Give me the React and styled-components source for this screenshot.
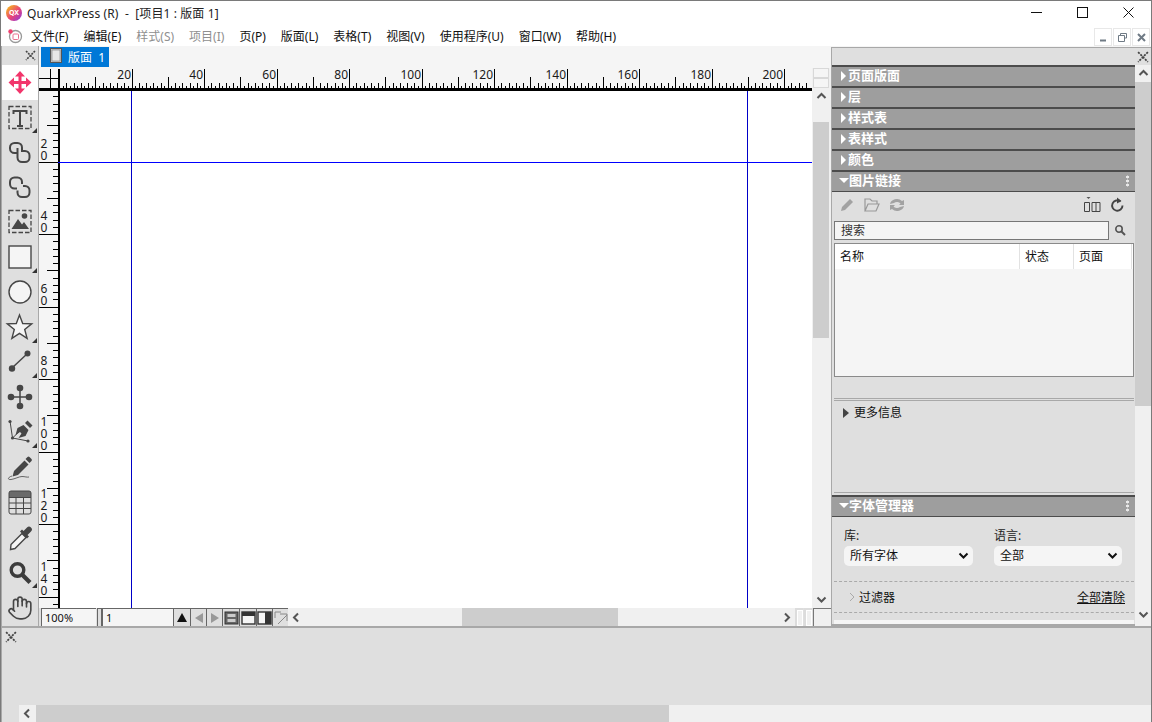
import React from "react";
import styled, { createGlobalStyle } from "styled-components";
import { Hand } from "lucide-react";

const UI_FONT = `"Noto Sans", "Noto Sans CJK SC", sans-serif`;

const GlobalStyle = createGlobalStyle`
	html, body {
		margin: 0;
		padding: 0;
		background: #ffffff;
	}
	* {
		box-sizing: border-box;
	}
`;

const MENUS = [
	{ label: "文件(F)" },
	{ label: "编辑(E)" },
	{ label: "样式(S)", off: true },
	{ label: "项目(I)", off: true },
	{ label: "页(P)" },
	{ label: "版面(L)" },
	{ label: "表格(T)" },
	{ label: "视图(V)" },
	{ label: "使用程序(U)" },
	{ label: "窗口(W)" },
	{ label: "帮助(H)" },
];

const PX_PER_UNIT = 3.625;

function CloseMark({ size = 11 }) {
	return (
		<svg width={size} height={size} viewBox="0 0 11 11">
			<path d="M1 1l9 9M10 1l-9 9" stroke="#444" strokeWidth="1.6" strokeDasharray="2 1" fill="none" />
		</svg>
	);
}

function Chevron({ dir = "up", color = "#555" }) {
	const paths = {
		up: "M1.5 7L5.5 3l4 4",
		down: "M1.5 3.5l4 4 4-4",
		left: "M7 1.5L3 5.5l4 4",
		right: "M4 1.5l4 4-4 4",
	};
	return (
		<svg width="11" height="11" viewBox="0 0 11 11">
			<path d={paths[dir]} stroke={color} strokeWidth="2" fill="none" />
		</svg>
	);
}

function TopRuler() {
	const ticks = [];
	for (let v = 0; v <= 206; v++) {
		const x = Math.round(20 + v * PX_PER_UNIT) + 0.5;
		let top = 18;
		if (v % 2 === 0) top = 15;
		if (v % 10 === 0) top = 9;
		if (v % 20 === 0) top = 1;
		ticks.push(<line key={v} x1={x} x2={x} y1={top} y2={20} stroke="#000" />);
		if (v % 20 === 0 && v > 0) {
			ticks.push(
				<text key={"t" + v} x={x - 1.5} y={11} textAnchor="end" fontSize="12" fontFamily={UI_FONT} fill="#1a1a1a">
					{v}
				</text>
			);
		}
	}
	return (
		<svg width="773" height="23" viewBox="0 0 773 23" style={{ display: "block", overflow: "visible" }}>
			<path d="M11.5 1v19M0 10.5h20" stroke="#000" fill="none" />
			<path d="M0 20.5h20" stroke="#000" fill="none" />
			<rect x="19" y="1" width="2" height="22" fill="#000" />
			<rect x="0" y="21" width="773" height="2" fill="#000" />
			<rect x="20" y="20" width="753" height="1" fill="#000" />
			{ticks}
		</svg>
	);
}

function SideRuler() {
	const ticks = [];
	for (let v = 2; v <= 142; v += 2) {
		const y = Math.round(v * PX_PER_UNIT) - 2 + 0.5;
		let left = 14;
		if (v % 10 === 0) left = 8;
		if (v % 20 === 0) left = 0;
		ticks.push(<line key={v} x1={left} x2={20} y1={y} y2={y} stroke="#000" />);
		if (v % 20 === 0) {
			const digits = String(v).split("");
			digits.forEach((d, i) => {
				ticks.push(
					<text key={v + "-" + i} x={1.5} y={y - 3 - (digits.length - 1 - i) * 12} fontSize="12" fontFamily={UI_FONT} fill="#1a1a1a">
						{d}
					</text>
				);
			});
		}
	}
	return (
		<svg width="21" height="517" viewBox="0 0 21 517" style={{ display: "block", flexShrink: 0 }}>
			<rect x="19" y="0" width="2" height="517" fill="#000" />
			{ticks}
		</svg>
	);
}

const Ink = "#464646";

const TOOLS = [
	{
		key: "move",
		active: true,
		art: (
			<g>
				<path d="M18 8v19M8.500 17.500h19" stroke="#f2356b" strokeWidth="3" fill="none" />
				<path d="M18 6l5 5.500H13zM18 29l5-5.500H13zM6.500 17.500l5.500-5v10zM29.500 17.500l-5.500-5v10z" fill="#f2356b" />
			</g>
		),
	},
	{
		key: "text",
		corner: true,
		art: (
			<g fill="none" stroke={Ink}>
				<rect x="7" y="6.500" width="22" height="22" strokeWidth="1.300" strokeDasharray="4.500 2" />
				<path d="M11.500 14v-3h13v3M18 11v15M15 26h6" strokeWidth="2" />
			</g>
		),
	},
	{
		key: "link",
		art: (
			<g fill="none" stroke={Ink} strokeWidth="2">
				<path d="M15 18h-2.500A4.500 4.500 0 0 1 8 13.500v-1A4.500 4.500 0 0 1 12.500 8h3a4.500 4.500 0 0 1 4.500 4.500V17" />
				<path d="M21 16h2a4.500 4.500 0 0 1 4.500 4.500v2a4.500 4.500 0 0 1-4.500 4.500h-3a4.500 4.500 0 0 1-4.500-4.500V13" />
			</g>
		),
	},
	{
		key: "unlink",
		art: (
			<g fill="none" stroke={Ink} strokeWidth="2">
				<path d="M15 18.500h-2.500A4.500 4.500 0 0 1 8 14v-2a4.500 4.500 0 0 1 4.500-4.500h3a4.500 4.500 0 0 1 4.500 4.500v2" />
				<path d="M21 16h2a4.500 4.500 0 0 1 4.500 4.500v2a4.500 4.500 0 0 1-4.500 4.500h-3a4.500 4.500 0 0 1-4.500-4.500v-2" />
			</g>
		),
	},
	{
		key: "picture",
		art: (
			<g>
				<rect x="7" y="5.500" width="22" height="22" fill="none" stroke={Ink} strokeWidth="1.300" strokeDasharray="4.500 2" />
				<circle cx="22.500" cy="11" r="2.800" fill={Ink} />
				<path d="M9.500 24l6.500-10 4 5.500 2-2.500 5 7z" fill={Ink} />
			</g>
		),
	},
	{
		key: "rect",
		corner: true,
		art: <rect x="7" y="6" width="22" height="22" fill="#f5f5f5" stroke={Ink} strokeWidth="1.400" />,
	},
	{
		key: "oval",
		art: <circle cx="18" cy="17" r="11" fill="#f5f5f5" stroke={Ink} strokeWidth="1.400" />,
	},
	{
		key: "star",
		corner: true,
		art: (
			<path
				d="M17.500 5l3.200 8.500 9 .400-7 5.600 2.400 8.800-7.600-5-7.600 5 2.400-8.800-7-5.600 9-.400z"
				fill="#f5f5f5"
				stroke={Ink}
				strokeWidth="1.400"
			/>
		),
	},
	{
		key: "line",
		corner: true,
		art: (
			<g fill={Ink}>
				<path d="M10 23l16-15" stroke={Ink} strokeWidth="1.500" />
				<circle cx="10" cy="23.500" r="3.200" />
				<circle cx="25.500" cy="8.500" r="3" />
			</g>
		),
	},
	{
		key: "nodes",
		art: (
			<g fill={Ink}>
				<path d="M18 7v20M7 17h22" stroke={Ink} strokeWidth="1.500" />
				<circle cx="18" cy="8" r="3.300" />
				<circle cx="18" cy="26" r="3.300" />
				<circle cx="9" cy="17" r="3.300" />
				<circle cx="27" cy="17" r="3.300" />
			</g>
		),
	},
	{
		key: "pen",
		corner: true,
		art: (
			<g fill={Ink}>
				<path d="M8 6l2.500 17 15.500 3M10.500 23L20 14" stroke={Ink} strokeWidth="1" fill="none" />
				<circle cx="8" cy="6.500" r="1.600" />
				<circle cx="10.500" cy="23" r="1.600" />
				<circle cx="26" cy="26" r="1.600" />
				<path d="M13.500 20l2-7 6-3 5 5-3 6-7 2 3-4.500-1.500-1.500z" />
				<path d="M23 8l2.500-2.500 5 5L28 13z" />
			</g>
		),
	},
	{
		key: "pencil",
		art: (
			<g>
				<path d="M12 21l10.500-10.500 4 4L16 25l-5.500 1.500z" fill={Ink} />
				<path d="M23.500 9l2-2a1.500 1.500 0 0 1 2 0l2 2a1.500 1.500 0 0 1 0 2l-2 2z" fill={Ink} />
				<path d="M10 26c-4 1-5 4-1 3.500s8-3 11-3c3 0 5 1 7 .500" stroke={Ink} strokeWidth="0.800" fill="none" />
			</g>
		),
	},
	{
		key: "table",
		art: (
			<g>
				<path d="M9 6h18a2 2 0 0 1 2 2v4H7V8a2 2 0 0 1 2-2z" fill="#6a6a6a" />
				<path
					d="M9 6h18a2 2 0 0 1 2 2v19a2 2 0 0 1-2 2H9a2 2 0 0 1-2-2V8a2 2 0 0 1 2-2zM7 12.500h22M7 18h22M7 23.500h22M14 12.500V29M21.500 12.500V29"
					fill="none"
					stroke={Ink}
					strokeWidth="1"
				/>
			</g>
		),
	},
	{
		key: "dropper",
		art: (
			<g>
				<path d="M9 24.500l11-11 4 4-11 11-4.500 1z" fill="#f5f5f5" stroke={Ink} strokeWidth="1.400" />
				<path d="M18 11.500l2-2 1.500 1.500 3.500-3.500a2.800 2.800 0 0 1 4 4l-3.500 3.500 1.500 1.500-2 2z" fill={Ink} />
			</g>
		),
	},
	{
		key: "zoom",
		corner: true,
		art: (
			<g fill="none" stroke="#3c3c3c">
				<circle cx="15.500" cy="15" r="6.300" strokeWidth="3.400" />
				<path d="M20.500 20l7.500 7.500" strokeWidth="4.200" />
			</g>
		),
	},
];

function Tool({ tool }) {
	return (
		<ToolButton $active={tool.active}>
			<svg width="36" height="35" viewBox="0 0 36 35">
				{tool.art}
			</svg>
			{tool.corner && <CornerMark />}
		</ToolButton>
	);
}

function BarLayoutIcon({ kind }) {
	if (kind === "split") {
		return (
			<svg width="15" height="14" viewBox="0 0 15 14">
				<rect x="1" y="1" width="13" height="12" fill="#f5f5f5" stroke="#333" strokeWidth="1.400" />
				<rect x="1" y="1" width="13" height="4" fill="#333" />
			</svg>
		);
	}
	if (kind === "half") {
		return (
			<svg width="15" height="14" viewBox="0 0 15 14">
				<rect x="1" y="1" width="13" height="12" fill="#f5f5f5" stroke="#333" strokeWidth="1.400" />
				<rect x="8" y="1" width="6" height="12" fill="#333" />
			</svg>
		);
	}
	return (
		<svg width="15" height="14" viewBox="0 0 15 14">
			<rect x="1" y="1" width="13" height="12" fill="#666" stroke="#333" />
			<rect x="3.500" y="3" width="8" height="3" fill="#ccc" />
			<rect x="3.500" y="8" width="8" height="3" fill="#ccc" />
		</svg>
	);
}

function Section({ title, open, dots }) {
	return (
		<PanelHeader>
			<Caret $open={open} />
			<HeaderLabel>{title}</HeaderLabel>
			{dots && <Dots />}
		</PanelHeader>
	);
}

export default function App() {
	return (
		<Windows>
			<GlobalStyle />
			<TitleBar>
				<AppLogo>
					<span>QX</span>
				</AppLogo>
				<TitleText>QuarkXPress (R)&nbsp; -&nbsp; [项目1 : 版面 1]</TitleText>
				<WindowButtons>
					<WindowButton>
						<svg width="11" height="11" viewBox="0 0 11 11">
							<path d="M0 5.500h11" stroke="#111" />
						</svg>
					</WindowButton>
					<WindowButton>
						<svg width="11" height="11" viewBox="0 0 11 11">
							<rect x="0.500" y="0.500" width="10" height="10" fill="none" stroke="#111" />
						</svg>
					</WindowButton>
					<WindowButton>
						<svg width="11" height="11" viewBox="0 0 11 11">
							<path d="M0.500 0.500l10 10M10.500 0.500l-10 10" stroke="#111" />
						</svg>
					</WindowButton>
				</WindowButtons>
			</TitleBar>

			<MenuBar>
				<DocLogo>
					<svg width="16" height="16" viewBox="0 0 16 16">
						<circle cx="8.500" cy="8.500" r="6" fill="#fff" stroke="#999" strokeWidth="1.300" />
						<rect x="6" y="6" width="5.500" height="5.500" rx="1" fill="none" stroke="#e8708e" />
						<circle cx="3.500" cy="3.500" r="2.200" fill="#f0406e" />
					</svg>
				</DocLogo>
				{MENUS.map((m) => (
					<MenuItem key={m.label} $off={m.off}>
						{m.label}
					</MenuItem>
				))}
				<ChildButtons>
					<ChildButton>
						<svg width="9" height="9" viewBox="0 0 9 9">
							<path d="M1 7.500h6" stroke="#6f7a85" strokeWidth="2" />
						</svg>
					</ChildButton>
					<ChildButton>
						<svg width="9" height="9" viewBox="0 0 9 9">
							<path d="M2.500 2V.500h6v4.500H7M.500 2.500h6v6h-6z" fill="none" stroke="#6f7a85" />
						</svg>
					</ChildButton>
					<ChildButton>
						<svg width="9" height="9" viewBox="0 0 9 9">
							<path d="M1 1l7 7M8 1L1 8" stroke="#6f7a85" strokeWidth="2" />
						</svg>
					</ChildButton>
				</ChildButtons>
			</MenuBar>

			<Workspace>
				<Toolbox>
					<ToolboxClose>
						<CloseMark />
					</ToolboxClose>
					{TOOLS.map((t) => (
						<Tool key={t.key} tool={t} />
					))}
					<ToolButton>
						<Hand size={26} strokeWidth={1.5} color="#464646" />
					</ToolButton>
				</Toolbox>

				<DocArea>
					<TabRow>
						<DocTab>
							<svg width="12" height="15" viewBox="0 0 12 15">
								<rect x="0.500" y="0.500" width="11" height="14" fill="#c9c9c9" stroke="#555" />
								<rect x="2" y="2" width="8" height="11" fill="#e8e8e8" stroke="#777" strokeWidth="0.600" />
							</svg>
							<span>版面&nbsp; 1</span>
						</DocTab>
					</TabRow>
					<DocBody>
						<ViewColumn>
							<TopRuler />
							<ViewRow>
								<SideRuler />
								<Canvas>
									<VGuide $left={71} />
									<VGuide $left={687} />
									<HGuide $top={71} />
								</Canvas>
							</ViewRow>
						</ViewColumn>
						<DocScroll>
							<SplitHandle />
							<SplitHandle />
							<ScrollEnd>
								<Chevron dir="up" />
							</ScrollEnd>
							<DocScrollGap />
							<VThumb $height={216} />
							<ScrollFill />
							<ScrollEnd>
								<Chevron dir="down" />
							</ScrollEnd>
						</DocScroll>
					</DocBody>
					<StatusStrip>
						<StatusField $width={55}>100%</StatusField>
						<StatusSplit />
						<StatusField $width={71}>1</StatusField>
						<StatusCell $width={17}>
							<Tri $dir="up" $color="#111" />
						</StatusCell>
						<StatusCell $width={16}>
							<Tri $dir="left" $color="#999" />
						</StatusCell>
						<StatusCell $width={16}>
							<Tri $dir="right" $color="#999" />
						</StatusCell>
						<StatusCell $width={17}>
							<BarLayoutIcon kind="stack" />
						</StatusCell>
						<StatusCell $width={17}>
							<BarLayoutIcon kind="split" />
						</StatusCell>
						<StatusCell $width={16}>
							<BarLayoutIcon kind="half" />
						</StatusCell>
						<StatusCell $width={16}>
							<svg width="14" height="14" viewBox="0 0 14 14">
								<path d="M1 1h6M1 1v6M4 13L13 4M6 3h7v7" stroke="#888" fill="none" />
							</svg>
						</StatusCell>
						<HScroll>
							<HScrollEnd>
								<Chevron dir="left" />
							</HScrollEnd>
							<HGap $width={157} />
							<HThumb $width={156} />
							<HGap $width={160} />
							<HScrollEnd>
								<Chevron dir="right" />
							</HScrollEnd>
						</HScroll>
						<MiniHandle />
						<MiniHandle />
						<SizeBox />
					</StatusStrip>
				</DocArea>

				<Dock>
					<DockTop>
						<CloseMark size={12} />
					</DockTop>
					<DockBody>
						<PanelStack>
							<Section title="页面版面" />
							<Section title="层" />
							<Section title="样式表" />
							<Section title="表样式" />
							<Section title="颜色" />
							<Section title="图片链接" open dots />
							<LinksBody>
								<LinkTools>
									<svg width="18" height="18" viewBox="0 0 18 18">
										<path d="M3 15l1-4 8-8 3 3-8 8z" fill="#a2a2a2" />
									</svg>
									<svg width="18" height="18" viewBox="0 0 18 18">
										<path d="M2 15V3h5l2 2h5v3M2 15l3-7h11l-3 7z" fill="#dfdfdf" stroke="#999" strokeWidth="1.200" />
									</svg>
									<svg width="18" height="18" viewBox="0 0 18 18">
										<path d="M2 8a7 6 0 0 1 12-3l2-1v5h-5l1.500-1.500a4 3 0 0 0-6.500-.500zM16 10a7 6 0 0 1-12 3l-2 1V9h5l-1.500 1.500a4 3 0 0 0 6.500.500z" fill="#a2a2a2" />
									</svg>
									<LinkToolsGap />
									<svg width="18" height="18" viewBox="0 0 18 18">
										<path d="M3.500 1h4L5.500 3z" fill="#555" />
										<path d="M1.500 6.500h5v9h-5zM9 6.500h8v9H9zM13 6.500v9" fill="none" stroke="#444" />
									</svg>
									<svg width="18" height="18" viewBox="0 0 18 18">
										<path d="M12.500 5.500a5.200 5.200 0 1 0 2 4" fill="none" stroke="#444" strokeWidth="1.900" />
										<path d="M9 1.500l4.500 3.500-4.500 2.500z" fill="#444" />
									</svg>
								</LinkTools>
								<SearchRow>
									<SearchField>搜索</SearchField>
									<svg width="12" height="12" viewBox="0 0 12 12">
										<circle cx="5" cy="5" r="3.200" fill="none" stroke="#555" strokeWidth="1.600" />
										<path d="M7.500 7.500l3.500 3.500" stroke="#555" strokeWidth="2" />
									</svg>
								</SearchRow>
								<LinkTable>
									<TableHead>
										<TableCol $width={185}>名称</TableCol>
										<TableCol $width={54}>状态</TableCol>
										<TableCol $width={58}>页面</TableCol>
									</TableHead>
								</LinkTable>
								<DoubleRule />
								<MoreRow>
									<Tri $dir="right" $color="#444" />
									<span>更多信息</span>
								</MoreRow>
								<SingleRule />
							</LinksBody>
							<Section title="字体管理器" open dots />
							<FontBody>
								<FieldGrid>
									<Field>
										<FieldLabel>库:</FieldLabel>
										<SelectBox $width={129}>
											<span>所有字体</span>
											<Chevron dir="down" color="#111" />
										</SelectBox>
									</Field>
									<Field>
										<FieldLabel>语言:</FieldLabel>
										<SelectBox $width={128}>
											<span>全部</span>
											<Chevron dir="down" color="#111" />
										</SelectBox>
									</Field>
								</FieldGrid>
								<FilterRow>
									<svg width="8" height="10" viewBox="0 0 8 10">
										<path d="M2 1l4 4-4 4" fill="none" stroke="#aaa" />
									</svg>
									<span>过滤器</span>
									<ClearLink>全部清除</ClearLink>
								</FilterRow>
								<FontList />
							</FontBody>
						</PanelStack>
						<DockScroll>
							<ScrollEnd>
								<Chevron dir="up" />
							</ScrollEnd>
							<VThumb $height={324} />
							<ScrollFill />
							<ScrollEnd>
								<Chevron dir="down" />
							</ScrollEnd>
						</DockScroll>
					</DockBody>
				</Dock>
			</Workspace>

			<BottomPanel>
				<BottomClose>
					<CloseMark size={12} />
				</BottomClose>
				<BottomScroll>
					<HScrollEnd>
						<Chevron dir="left" />
					</HScrollEnd>
					<HThumb $width={633} />
				</BottomScroll>
			</BottomPanel>
		</Windows>
	);
}

const Windows = styled.div`
	width: 1152px;
	height: 722px;
	overflow: hidden;
	display: flex;
	flex-direction: column;
	background-color: #ffffff;
	border: 1px solid #7a7a7a;
	border-bottom: 0;
	font-family: ${UI_FONT};
	font-size: 12px;
	color: #111;
`;

const TitleBar = styled.div`
	height: 23px;
	display: flex;
	align-items: center;
	padding-left: 5px;
	flex-shrink: 0;
`;

const AppLogo = styled.div`
	width: 16px;
	height: 16px;
	border-radius: 50%;
	background: linear-gradient(135deg, #f6b21b 10%, #e8417a 55%, #8d3bd8 95%);
	display: flex;
	align-items: center;
	justify-content: center;
	margin-right: 5px;
	span {
		font-size: 7px;
		line-height: 7px;
		color: #fff;
		font-weight: 700;
	}
`;

const TitleText = styled.div`
	font-size: 12px;
	letter-spacing: 0.1px;
	color: #222;
`;

const WindowButtons = styled.div`
	margin-left: auto;
	display: flex;
`;

const WindowButton = styled.div`
	width: 46px;
	height: 23px;
	display: flex;
	align-items: center;
	justify-content: center;
`;

const MenuBar = styled.div`
	height: 22px;
	display: flex;
	align-items: center;
	padding: 2px 0 0 6px;
	flex-shrink: 0;
`;

const DocLogo = styled.div`
	width: 16px;
	height: 16px;
	margin-right: 8px;
	svg {
		display: block;
	}
`;

const MenuItem = styled.div`
	margin-right: 15px;
	font-size: 12px;
	color: ${(props) => (props.$off ? "#8f8f8f" : "#111")};
`;

const ChildButtons = styled.div`
	margin-left: auto;
	align-self: flex-end;
	display: flex;
	gap: 1px;
	margin-right: 1px;
`;

const ChildButton = styled.div`
	width: 18px;
	height: 18px;
	border: 1px solid #e8e8e8;
	display: flex;
	align-items: center;
	justify-content: center;
`;

const Workspace = styled.div`
	height: 580px;
	display: flex;
	flex-shrink: 0;
	background-color: #f5f5f5;
`;

const Toolbox = styled.div`
	width: 38px;
	flex-shrink: 0;
	background-color: #dfdfdf;
	border-left: 1px solid #a8a8a8;
	border-right: 1px solid #a8a8a8;
	overflow: hidden;
`;

const ToolboxClose = styled.div`
	height: 19px;
	display: flex;
	justify-content: flex-end;
	align-items: center;
	padding-right: 2px;
`;

const ToolButton = styled.div`
	position: relative;
	height: 35px;
	width: 36px;
	display: flex;
	align-items: center;
	justify-content: center;
	background-color: ${(props) => (props.$active ? "#ffffff" : "transparent")};
`;

const CornerMark = styled.span`
	position: absolute;
	right: 1px;
	bottom: 2px;
	width: 0;
	height: 0;
	border-left: 5px solid transparent;
	border-bottom: 5px solid #333;
`;

const DocArea = styled.div`
	width: 792px;
	flex-shrink: 0;
	display: flex;
	flex-direction: column;
`;

const TabRow = styled.div`
	height: 22px;
	padding: 1px 0 0 2px;
	background-color: #f5f5f5;
`;

const DocTab = styled.div`
	width: 68px;
	height: 20px;
	background-color: #0078d7;
	color: #ffffff;
	display: flex;
	align-items: center;
	gap: 6px;
	padding-left: 9px;
	font-size: 12px;
	svg {
		margin-top: -4px;
	}
`;

const DocBody = styled.div`
	height: 540px;
	display: flex;
`;

const ViewColumn = styled.div`
	width: 773px;
	display: flex;
	flex-direction: column;
`;

const ViewRow = styled.div`
	flex: 1;
	display: flex;
	min-height: 0;
	overflow: hidden;
`;

const Canvas = styled.div`
	position: relative;
	flex: 1;
	background-color: #ffffff;
`;

const VGuide = styled.div`
	position: absolute;
	top: 0;
	bottom: 0;
	left: ${(props) => props.$left}px;
	width: 1px;
	background-color: #0000c8;
`;

const HGuide = styled.div`
	position: absolute;
	left: -2px;
	right: 0;
	top: ${(props) => props.$top}px;
	height: 1px;
	background-color: #0000ff;
`;

const DocScroll = styled.div`
	width: 19px;
	padding: 0 2px 0 1px;
	display: flex;
	flex-direction: column;
	background-color: #f0f0f0;
`;

const SplitHandle = styled.div`
	height: 10px;
	border: 1px solid #d8d8d8;
	background-color: #f5f5f5;
	flex-shrink: 0;
`;

const ScrollEnd = styled.div`
	height: 17px;
	flex-shrink: 0;
	display: flex;
	align-items: center;
	justify-content: center;
`;

const DocScrollGap = styled.div`
	height: 17px;
	flex-shrink: 0;
`;

const VThumb = styled.div`
	height: ${(props) => props.$height}px;
	flex-shrink: 0;
	background-color: #cdcdcd;
`;

const ScrollFill = styled.div`
	flex: 1;
`;

const StatusStrip = styled.div`
	height: 18px;
	display: flex;
	align-items: stretch;
	padding-left: 2px;
	background-color: #dfdfdf;
`;

const StatusField = styled.div`
	width: ${(props) => props.$width}px;
	background-color: #f5f5f5;
	border-top: 1px solid #666;
	border-left: 1px solid #666;
	padding-left: 3px;
	font-size: 11px;
	line-height: 17px;
	flex-shrink: 0;
`;

const StatusSplit = styled.div`
	width: 5px;
	border-left: 1px solid #666;
	border-right: 1px solid #666;
	border-top: 1px solid #666;
	margin-left: 1px;
	flex-shrink: 0;
`;

const StatusCell = styled.div`
	width: ${(props) => props.$width}px;
	border-top: 1px solid #666;
	border-left: 1px solid #666;
	display: flex;
	align-items: center;
	justify-content: center;
	flex-shrink: 0;
`;

const Tri = styled.span`
	width: 0;
	height: 0;
	flex-shrink: 0;
	${(props) =>
		props.$dir === "up"
			? `border-left: 5px solid transparent; border-right: 5px solid transparent; border-bottom: 9px solid ${props.$color};`
			: ""}
	${(props) =>
		props.$dir === "left"
			? `border-top: 5px solid transparent; border-bottom: 5px solid transparent; border-right: 8px solid ${props.$color};`
			: ""}
	${(props) =>
		props.$dir === "right"
			? `border-top: 5px solid transparent; border-bottom: 5px solid transparent; border-left: 8px solid ${props.$color};`
			: ""}
`;

const HScroll = styled.div`
	width: 507px;
	flex-shrink: 0;
	display: flex;
	background-color: #f0f0f0;
`;

const HScrollEnd = styled.div`
	width: 17px;
	flex-shrink: 0;
	display: flex;
	align-items: center;
	justify-content: center;
	background-color: #f0f0f0;
`;

const HGap = styled.div`
	width: ${(props) => props.$width}px;
	flex-shrink: 0;
`;

const HThumb = styled.div`
	width: ${(props) => props.$width}px;
	flex-shrink: 0;
	background-color: #cdcdcd;
`;

const MiniHandle = styled.div`
	width: 8px;
	background-color: #f0f0f0;
	border-top: 2px solid #dcdcdc;
	border-left: 2px solid #dcdcdc;
	box-shadow: inset 0 0 0 1px #ffffff;
	flex-shrink: 0;
	margin-right: 1px;
`;

const SizeBox = styled.div`
	flex: 1;
	background-color: #f0f0f0;
	border-top: 1px solid #777;
	border-left: 1px solid #777;
`;

const Dock = styled.div`
	flex: 1;
	display: flex;
	flex-direction: column;
	min-width: 0;
	margin-top: 1px;
	border-top: 1px solid #a8a8a8;
	border-left: 1px solid #a8a8a8;
	background-color: #dfdfdf;
`;

const DockTop = styled.div`
	height: 17px;
	flex-shrink: 0;
	display: flex;
	align-items: center;
	justify-content: flex-end;
	padding-right: 2px;
`;

const DockBody = styled.div`
	flex: 1;
	min-height: 0;
	display: flex;
`;

const PanelStack = styled.div`
	width: 303px;
	flex-shrink: 0;
	display: flex;
	flex-direction: column;
	border-bottom: 2px solid #a8a8a8;
`;

const PanelHeader = styled.div`
	position: relative;
	height: 21px;
	flex-shrink: 0;
	display: flex;
	align-items: center;
	padding-left: 9px;
	background-color: #9e9e9e;
	border-top: 2px solid #4c4c4c;
	color: #ffffff;
	font-weight: 700;
	font-size: 13px;
	line-height: 19px;
`;

const HeaderLabel = styled.span`
	margin-top: -2px;
`;

const Caret = styled.span`
	width: 0;
	height: 0;
	margin-right: 2px;
	${(props) =>
		props.$open
			? `border-left: 5px solid transparent; border-right: 5px solid transparent; border-top: 5px solid #fff; margin-left: -2px; margin-right: 0; margin-top: -3px;`
			: `border-top: 5px solid transparent; border-bottom: 5px solid transparent; border-left: 5px solid #fff; margin-top: -2px;`}
`;

const Dots = styled.span`
	position: absolute;
	right: 6px;
	top: 3px;
	width: 3px;
	height: 12px;
	background-image: radial-gradient(circle at center, #e8e8e8 1.4px, transparent 1.6px);
	background-size: 3px 4px;
`;

const LinksBody = styled.div`
	height: 304px;
	flex-shrink: 0;
	border-top: 1px solid #4c4c4c;
	display: flex;
	flex-direction: column;
	padding: 0 1px 0 2px;
`;

const LinkTools = styled.div`
	height: 29px;
	display: flex;
	align-items: flex-start;
	gap: 7px;
	padding: 4px 8px 0 4px;
	flex-shrink: 0;
`;

const LinkToolsGap = styled.div`
	flex: 1;
`;

const SearchRow = styled.div`
	height: 18px;
	display: flex;
	align-items: center;
	gap: 5px;
	flex-shrink: 0;
`;

const SearchField = styled.div`
	width: 275px;
	height: 19px;
	border: 1px solid #777;
	background-color: #f5f5f5;
	padding-left: 6px;
	font-size: 12px;
	line-height: 17px;
	color: #333;
`;

const LinkTable = styled.div`
	margin-top: 4px;
	height: 134px;
	flex-shrink: 0;
	border: 1px solid #8a8a8a;
	background-color: #f5f5f5;
`;

const TableHead = styled.div`
	display: flex;
	height: 25px;
	background-color: #ffffff;
`;

const TableCol = styled.div`
	width: ${(props) => props.$width}px;
	padding-left: 5px;
	font-size: 12px;
	line-height: 26px;
	border-right: 1px solid #e2e2e2;
`;

const DoubleRule = styled.div`
	margin-top: 21px;
	height: 3px;
	flex-shrink: 0;
	border-top: 1px solid #a8a8a8;
	border-bottom: 1px solid #a8a8a8;
`;

const MoreRow = styled.div`
	height: 91px;
	flex-shrink: 0;
	display: flex;
	align-items: flex-start;
	gap: 5px;
	padding: 4px 0 0 9px;
	font-size: 12px;
	span:last-child {
		line-height: 16px;
	}
	span:first-child {
		margin-top: 3px;
		border-top-width: 5px;
		border-bottom-width: 5px;
		border-left-width: 6px;
	}
`;

const SingleRule = styled.div`
	height: 1px;
	flex-shrink: 0;
	background-color: #a8a8a8;
`;

const FontBody = styled.div`
	flex: 1;
	min-height: 0;
	overflow: hidden;
	border-top: 1px solid #4c4c4c;
	padding: 0 1px 0 2px;
	display: flex;
	flex-direction: column;
`;

const FieldGrid = styled.div`
	display: flex;
	height: 65px;
	flex-shrink: 0;
	gap: 21px;
	padding: 9px 0 0 10px;
	border-bottom: 1px dashed #aaaaaa;
`;

const Field = styled.div`
	display: flex;
	flex-direction: column;
`;

const FieldLabel = styled.div`
	font-size: 12px;
	line-height: 20px;
	color: #222;
`;

const SelectBox = styled.div`
	width: ${(props) => props.$width}px;
	height: 20px;
	border-radius: 5px;
	background-color: #f5f5f5;
	display: flex;
	align-items: center;
	justify-content: space-between;
	padding: 0 4px 2px 6px;
	font-size: 12px;
`;

const FilterRow = styled.div`
	height: 31px;
	flex-shrink: 0;
	display: flex;
	align-items: center;
	gap: 3px;
	padding: 0 9px 0 14px;
	font-size: 12px;
	border-bottom: 1px dashed #aaaaaa;
`;

const ClearLink = styled.span`
	margin-left: auto;
	text-decoration: underline;
`;

const FontList = styled.div`
	margin-top: 7px;
	flex: 1;
	background-color: #f5f5f5;
`;

const DockScroll = styled.div`
	flex: 1;
	display: flex;
	flex-direction: column;
	padding-bottom: 3px;
	background-color: #f0f0f0;
`;

const BottomPanel = styled.div`
	flex: 1;
	min-height: 0;
	display: flex;
	flex-direction: column;
	justify-content: space-between;
	background-color: #dfdfdf;
	border-top: 2px solid #a8a8a8;
	border-left: 1px solid #a8a8a8;
`;

const BottomClose = styled.div`
	padding: 2px 0 0 3px;
	height: 20px;
`;

const BottomScroll = styled.div`
	height: 17px;
	margin-left: 17px;
	display: flex;
	background-color: #f0f0f0;
`;
